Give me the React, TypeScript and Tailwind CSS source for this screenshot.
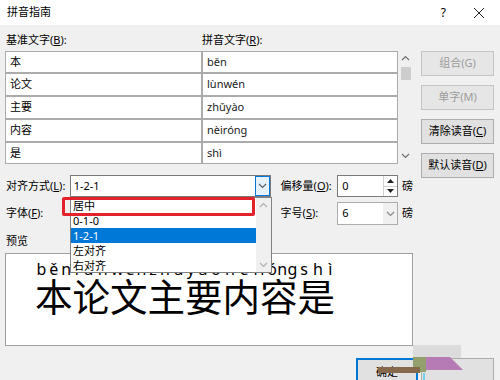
import React from 'react'

const rows = [
  { base: '本', py: 'běn', h: 'h-[22px]' },
  { base: '论文', py: 'lùnwén', h: 'h-[23px]' },
  { base: '主要', py: 'zhǔyào', h: 'h-[23px]' },
  { base: '内容', py: 'nèiróng', h: 'h-[23px]' },
  { base: '是', py: 'shì', h: 'h-[22px]' },
]

const preview = [
  ['本', 'běn'],
  ['论', 'lùn'],
  ['文', 'wén'],
  ['主', 'zhǔ'],
  ['要', 'yào'],
  ['内', 'nèi'],
  ['容', 'róng'],
  ['是', 'shì'],
]

const listItems = ['居中', '0-1-0', '1-2-1', '左对齐', '右对齐']

const Chevron = ({ up = false, color = '#606060' }: { up?: boolean; color?: string }) => (
  <svg width="9" height="6" viewBox="0 0 9 6">
    <polyline
      points={up ? '1,5 4.5,1.5 8,5' : '1,1 4.5,4.5 8,1'}
      fill="none"
      stroke={color}
      strokeWidth="1.2"
    />
  </svg>
)

const Btn = ({ children, disabled = false }: { children: React.ReactNode; disabled?: boolean }) => (
  <div
    className={
      disabled
        ? 'h-[25px] w-[73px] flex items-center justify-center border border-[#c4c4c4] bg-[#e6e6e6] text-[#9b9b9b]'
        : 'h-[25px] w-[73px] flex items-center justify-center border border-[#adadad] bg-[#e1e1e1] text-black'
    }
  >
    {children}
  </div>
)

export default function App() {
  return (
    <div className="relative w-[500px] h-[380px] overflow-hidden bg-[#f0f0f0] text-[11px] text-black font-['Noto_Sans','Noto_Sans_CJK_SC',sans-serif]">
      {/* title bar */}
      <div className="h-[25px] bg-white flex items-center pl-[7px]">
        <span className="text-[11px]">拼音指南</span>
        <span className="ml-auto text-[12px] mr-[27px]">?</span>
        <svg width="12" height="12" viewBox="0 0 12 12" className="mr-[15px]">
          <line x1="1" y1="1" x2="11" y2="11" stroke="#222" strokeWidth="1" />
          <line x1="11" y1="1" x2="1" y2="11" stroke="#222" strokeWidth="1" />
        </svg>
      </div>

      <div className="flex pl-[5px]">
        {/* left column */}
        <div className="w-[408px]">
          <div className="h-[26px] flex items-end pb-[3px]">
            <span className="w-[197px] pl-[1px] leading-[16px]">
              基准文字(<span className="underline">B</span>):
            </span>
            <span className="leading-[16px]">
              拼音文字(<span className="underline">R</span>):
            </span>
          </div>

          <div className="flex">
            <div className="w-[393px]">
              {rows.map((r) => (
                <div key={r.base} className={`flex ${r.h}`}>
                  <div className="w-[197px] h-full bg-white border border-[#ababab] flex items-center pl-[4px]">
                    {r.base}
                  </div>
                  <div className="w-[196px] h-full bg-white border border-[#ababab] flex items-center pl-[4px] text-[#222]">
                    {r.py}
                  </div>
                </div>
              ))}
            </div>
            <div className="ml-[2px] w-[11px] h-[113px] flex flex-col items-center">
              <div className="h-[14px] flex items-center">
                <Chevron up color="#707070" />
              </div>
              <div className="w-[10px] h-[13px] bg-[#cdcdcd] mt-[2px]" />
              <div className="mt-auto h-[16px] flex items-center">
                <Chevron color="#707070" />
              </div>
            </div>
          </div>

          {/* alignment / offset */}
          <div className="mt-[11px] h-[22px] flex items-center">
            <span className="w-[65px] pl-[1px]">
              对齐方式(<span className="underline">L</span>):
            </span>
            <div className="w-[202px] h-full bg-white border border-[#7a7a7a] flex items-center">
              <span className="pl-[3px]">1-2-1</span>
              <div className="ml-auto w-[15px] h-full bg-[#e5f1fb] border border-[#0078d7] flex items-center justify-center">
                <Chevron />
              </div>
            </div>
            <span className="ml-[10px] w-[57px]">
              偏移量(<span className="underline">O</span>):
            </span>
            <div className="w-[61px] h-full bg-white border border-[#7a7a7a] flex items-center">
              <span className="pl-[4px]">0</span>
              <div className="ml-auto w-[14px] h-full flex flex-col border-l border-[#d0d0d0]">
                <div className="flex-1 flex items-center justify-center border-b border-[#d0d0d0]">
                  <svg width="7" height="4" viewBox="0 0 7 4">
                    <polygon points="0,4 3.5,0 7,4" fill="#222" />
                  </svg>
                </div>
                <div className="flex-1 flex items-center justify-center">
                  <svg width="7" height="4" viewBox="0 0 7 4">
                    <polygon points="0,0 3.5,4 7,0" fill="#222" />
                  </svg>
                </div>
              </div>
            </div>
            <span className="ml-[4px]">磅</span>
          </div>

          {/* font / size */}
          <div className="mt-[5px] h-[23px] flex items-center">
            <span className="w-[65px] pl-[1px]">
              字体(<span className="underline">F</span>):
            </span>
            <div className="w-[202px] h-full bg-white border border-[#adadad]" />
            <span className="ml-[10px] w-[57px]">
              字号(<span className="underline">S</span>):
            </span>
            <div className="w-[61px] h-full bg-white border border-[#adadad] flex items-center">
              <span className="pl-[4px]">6</span>
              <div className="ml-auto w-[14px] h-full bg-[#f0f0f0] flex items-center justify-center">
                <Chevron color="#8a8a8a" />
              </div>
            </div>
            <span className="ml-[4px]">磅</span>
          </div>

          <div className="mt-[8px] h-[16px] leading-[16px] pl-[1px]">预览</div>

          <div className="mt-[4px] h-[93px] bg-white border border-[#a0a0a0] pl-[29px] pt-[7px]">
            <div className="flex">
              {preview.map(([c, p]) => (
                <div key={c} className="w-[37.5px] flex flex-col">
                  <div className="h-[16px] flex justify-around text-[16px] leading-[16px] font-['Noto_Sans',sans-serif]">
                    {p.split('').map((ch, i) => (
                      <span key={i}>{ch}</span>
                    ))}
                  </div>
                  <div className="text-[37.5px] leading-[40px] text-center">{c}</div>
                </div>
              ))}
            </div>
          </div>
        </div>

        {/* right buttons */}
        <div className="ml-[8px] pt-[26px] flex flex-col gap-[9px]">
          <Btn disabled>组合(G)</Btn>
          <Btn disabled>单字(M)</Btn>
          <Btn>
            清除读音(<span className="underline">C</span>)
          </Btn>
          <Btn>
            默认读音(<span className="underline">D</span>)
          </Btn>
        </div>
      </div>

      {/* bottom buttons */}
      <div className="mt-[12px] flex justify-end pr-[6px] gap-[3px]">
        <div className="w-[62px] h-[25px] border-2 border-[#0078d7] bg-[#e1e1e1] flex items-center justify-center pt-[4px]">
          确定
        </div>
        <div className="w-[73px] h-[25px] border border-[#adadad] bg-[#e1e1e1]" />
      </div>

      {/* open dropdown list */}
      <div className="absolute left-[70px] top-[197px] w-[202px] h-[76px] bg-white border border-[#828282] flex">
        <div className="flex-1 flex flex-col">
          {listItems.map((it) => (
            <div
              key={it}
              className={
                it === '1-2-1'
                  ? 'h-[15px] leading-[15px] pl-[2px] bg-[#0078d7] text-white'
                  : 'h-[15px] leading-[15px] pl-[2px]'
              }
            >
              {it}
            </div>
          ))}
        </div>
        <div className="w-[15px] h-full bg-[#f0f0f0] flex flex-col items-center justify-between py-[4px]">
          <Chevron up color="#b0b0b0" />
          <Chevron color="#b0b0b0" />
        </div>
      </div>

      {/* red highlight */}
      <div className="absolute left-[62px] top-[197px] w-[193px] h-[19px] border-[3px] border-[#e3222b] rounded-[2px]" />

      {/* watermark */}
      <svg className="absolute left-[370px] top-[340px]" width="130" height="40" viewBox="0 0 130 40">
        <rect x="43" y="5" width="48" height="13" fill="#dcdcdc" />
        <polygon points="50,17 80,17 93,30 53,30" fill="#b67bb4" />
        <rect x="43" y="17" width="13" height="15" fill="#93a06e" />
        <rect x="8" y="27" width="42" height="6" fill="#86684c" />
        <rect x="53" y="33" width="2" height="7" fill="#6fd0e8" />
      </svg>
    </div>
  )
}
